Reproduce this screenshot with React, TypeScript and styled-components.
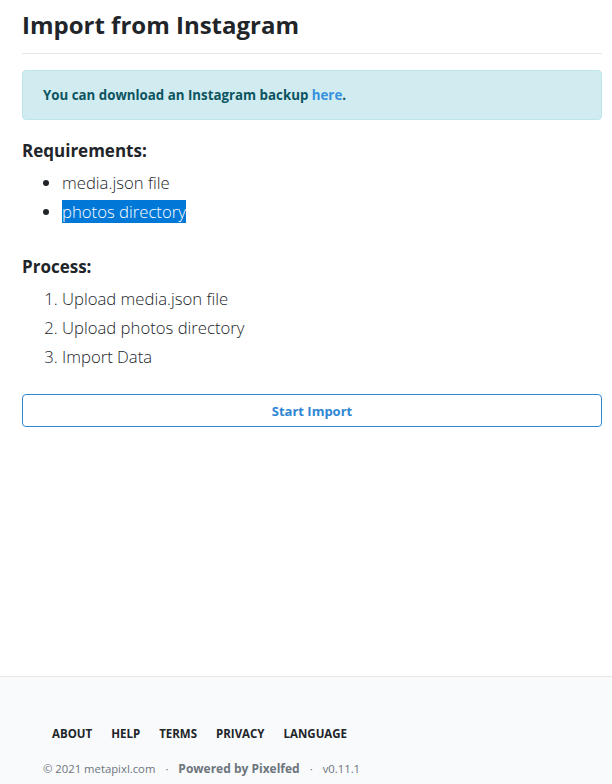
import React from 'react';
import styled, { createGlobalStyle } from 'styled-components';

const GlobalStyle = createGlobalStyle`
  html, body {
    margin: 0;
    padding: 0;
    background: #fff;
  }
  body {
    font-family: "Open Sans", "Noto Sans", sans-serif;
    color: #212529;
  }
`;

const Page = styled.div`
  min-height: 784px;
  display: flex;
  flex-direction: column;
`;

const Main = styled.main`
  flex: 1;
  padding: 7px 10px 0 22px;
`;

const Title = styled.h3`
  margin: 0;
  font-size: 24px;
  font-weight: 700;
  line-height: 36px;
  color: #212529;
  padding-bottom: 10px;
  border-bottom: 1px solid #e4e6e8;
`;

const Alert = styled.div`
  margin-top: 16px;
  padding: 0 20px;
  height: 48px;
  display: flex;
  align-items: center;
  background: #d1ecf1;
  border: 1px solid #bee5eb;
  border-radius: 4px;
  color: #0c5460;
  font-size: 13.3px;
  font-weight: 700;
`;

const Link = styled.a`
  color: #3490dc;
  text-decoration: none;
`;

const SectionTitle = styled.h5`
  margin: 19px 0 5px;
  font-size: 17px;
  font-weight: 700;
  line-height: 24px;
`;

const List = styled.ul<{ ordered?: boolean }>`
  margin: 0;
  padding-left: 40px;
  font-size: 16.7px;
  font-weight: 300;
  line-height: 29px;
  color: #212529;
  list-style: ${p => (p.ordered ? 'decimal' : 'disc')};
`;

const Selected = styled.span`
  background: #0078d7;
  color: #fff;
`;

const Spacer = styled.div`
  height: 10px;
`;

const Button = styled.button`
  display: block;
  width: 100%;
  margin-top: 23px;
  height: 33px;
  background: #fff;
  border: 1px solid #2f86d2;
  border-radius: 4px;
  color: #2f86d2;
  font-family: inherit;
  font-size: 13px;
  font-weight: 700;
  cursor: pointer;
`;

const Footer = styled.footer`
  background: #f9fafb;
  border-top: 1px solid #e4e6e8;
  padding: 47px 0 6px 43px;
`;

const FooterLinks = styled.nav`
  display: flex;
  gap: 1px;
  font-size: 11.5px;
  font-weight: 700;
  line-height: 20px;
`;

const FooterLink = styled.a`
  padding: 0 9px;
  color: #212529;
  text-decoration: none;
  text-transform: uppercase;
`;

const Credits = styled.p`
  margin: 16px 0 0;
  font-size: 11.3px;
  line-height: 18px;
  color: #6c757d;
`;

const Dot = styled.span`
  margin: 0 10px;
`;

const Strong = styled.span`
  font-size: 12px;
  font-weight: 700;
`;

export default function App() {
  return (
    <Page>
      <GlobalStyle />
      <Main>
        <Title>Import from Instagram</Title>
        <Alert>
          <span>
            You can download an Instagram backup <Link href="#">here</Link>.
          </span>
        </Alert>
        <SectionTitle>Requirements:</SectionTitle>
        <List>
          <li>media.json file</li>
          <li>
            <Selected>photos directory</Selected>
          </li>
        </List>
        <Spacer />
        <SectionTitle>Process:</SectionTitle>
        <List as="ol" ordered>
          <li>Upload media.json file</li>
          <li>Upload photos directory</li>
          <li>Import Data</li>
        </List>
        <Button>Start Import</Button>
      </Main>
      <Footer>
        <FooterLinks>
          {['About', 'Help', 'Terms', 'Privacy', 'Language'].map(item => (
            <FooterLink key={item} href="#">
              {item}
            </FooterLink>
          ))}
        </FooterLinks>
        <Credits>
          © 2021 metapixl.com<Dot>·</Dot>
          <Strong>Powered by Pixelfed</Strong>
          <Dot>·</Dot>v0.11.1
        </Credits>
      </Footer>
    </Page>
  );
}
